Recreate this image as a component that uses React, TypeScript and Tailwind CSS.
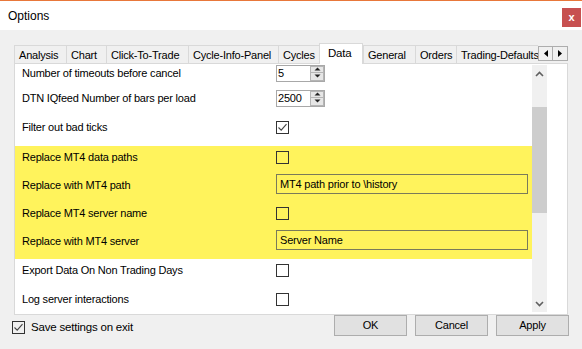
import React from 'react';

const FONT = "[font-family:'Liberation_Sans',Arial,sans-serif]";

function Checkbox({ checked = false }: { checked?: boolean }) {
  return (
    <span className="inline-flex w-[13px] h-[13px] shrink-0 items-center justify-center border border-[#333333]">
      {checked && (
        <svg width="11" height="11" viewBox="0 0 11 11">
          <path d="M1.5 5.5 L4.2 8.2 L9.5 2.2" fill="none" stroke="#444444" strokeWidth="1.1" />
        </svg>
      )}
    </span>
  );
}

function SpinBox({ value }: { value: string }) {
  return (
    <div className="flex w-[49px] h-[17px] border border-[#a8a8a8] bg-white">
      <span className="flex-1 pl-[1px] leading-[15px]">{value}</span>
      <div className="flex flex-col w-[14px] h-[15px]">
        <span className="flex h-[7px] items-center justify-center border border-[#b5b5b5] bg-[#e6e6e6]">
          <svg width="7" height="4" viewBox="0 0 7 4"><path d="M0.5 3.5 L3.5 0.5 L6.5 3.5 Z" fill="#222" /></svg>
        </span>
        <span className="flex h-[8px] items-center justify-center border border-t-0 border-[#b5b5b5] bg-[#e6e6e6]">
          <svg width="7" height="4" viewBox="0 0 7 4"><path d="M0.5 0.5 L3.5 3.5 L6.5 0.5 Z" fill="#222" /></svg>
        </span>
      </div>
    </div>
  );
}

function TextBox({ value }: { value: string }) {
  return (
    <div className="w-[252px] h-[20px] border border-[#7a7a5a] pl-[3px] leading-[18px] -mt-[3px]">{value}</div>
  );
}

type Row = { label: string; h: string; inner: string; yellow?: boolean; ctrl: React.ReactNode };

const ROWS: Row[] = [
  { label: 'Number of timeouts before cancel', h: 'h-[23px]', inner: 'h-[18px]', ctrl: <SpinBox value="5" /> },
  { label: 'DTN IQfeed Number of bars per load', h: 'h-[29px]', inner: 'h-[22px]', ctrl: <SpinBox value="2500" /> },
  { label: 'Filter out bad ticks', h: 'h-[30px]', inner: 'h-[22px]', ctrl: <Checkbox checked /> },
  { label: 'Replace MT4 data paths', h: 'h-[28px]', inner: 'h-[22px]', yellow: true, ctrl: <Checkbox /> },
  { label: 'Replace with MT4 path', h: 'h-[28px]', inner: 'h-[22px]', yellow: true, ctrl: <TextBox value="MT4 path prior to \history" /> },
  { label: 'Replace MT4 server name', h: 'h-[28px]', inner: 'h-[22px]', yellow: true, ctrl: <Checkbox /> },
  { label: 'Replace with MT4 server', h: 'h-[29px]', inner: 'h-[22px]', yellow: true, ctrl: <TextBox value="Server Name" /> },
  { label: 'Export Data On Non Trading Days', h: 'h-[29px]', inner: 'h-[22px]', ctrl: <Checkbox /> },
  { label: 'Log server interactions', h: 'h-[29px]', inner: 'h-[22px]', ctrl: <Checkbox /> },
];

const TABS = [
  { label: 'Analysis', w: 'w-[52px]' },
  { label: 'Chart', w: 'w-[40px]' },
  { label: 'Click-To-Trade', w: 'w-[82px]' },
  { label: 'Cycle-Info-Panel', w: 'w-[90px]' },
  { label: 'Cycles', w: 'w-[41px]' },
  { label: 'Data', w: 'w-[44px]', active: true },
  { label: 'General', w: 'w-[52px]' },
  { label: 'Orders', w: 'w-[41px]' },
  { label: 'Trading-Defaults', w: 'w-[95px]' },
];

function Btn({ children }: { children: React.ReactNode }) {
  return (
    <button className="w-[73px] h-[21px] border border-[#adadad] bg-[#e1e1e1] text-[11px] leading-[19px] text-black">
      {children}
    </button>
  );
}

export default function App() {
  return (
    <div className={`w-[582px] h-[349px] bg-[#f0f0f0] overflow-hidden text-[11px] tracking-[-0.2px] text-black ${FONT}`}>
      <div className="h-px bg-[#e8773a]" />
      {/* title bar */}
      <div className="flex h-[29px] items-start bg-white tracking-normal">
        <span className="ml-[8px] mt-[7px] text-[12px] leading-[16px]">Options</span>
        <span className="ml-auto mr-[1px] mt-[7px] flex w-[19px] h-[19px] items-center justify-center bg-[#c75050] text-[11px] font-bold leading-none text-white">x</span>
      </div>

      <div className="pl-[14px] pt-[13px]">
        {/* tabs */}
        <div className="relative z-10 flex h-[21px] -mb-px">
          <div className="flex w-[524px] overflow-hidden">
            {TABS.map((t) =>
              t.active ? (
                <div key={t.label} className={`${t.w} shrink-0 h-[21px] border-x border-t border-[#d9d9d9] bg-white pl-[8px] leading-[19px] text-[11.5px]`}>
                  {t.label}
                </div>
              ) : (
                <div key={t.label} className={`${t.w} shrink-0 mt-[2px] h-[18px] border-l border-t border-[#d9d9d9] bg-[#f0f0f0] pl-[4px] leading-[18px] whitespace-nowrap`}>
                  {t.label}
                </div>
              )
            )}
          </div>
          <div className="mt-[3px] flex h-[15px]">
            <span className="flex w-[15px] h-[15px] items-center justify-center border border-[#adadad] bg-[#f0f0f0]">
              <svg width="4" height="7" viewBox="0 0 4 7"><path d="M4 0 L0 3.5 L4 7 Z" fill="#000" /></svg>
            </span>
            <span className="flex w-[15px] h-[15px] items-center justify-center border border-l-0 border-[#adadad] bg-[#f0f0f0]">
              <svg width="4" height="7" viewBox="0 0 4 7"><path d="M0 0 L4 3.5 L0 7 Z" fill="#000" /></svg>
            </span>
          </div>
        </div>

        {/* tab page */}
        <div className="flex w-[554px] h-[252px] border border-[#d9d9d9] bg-white">
          <div className="w-[517px] h-[250px] overflow-hidden">
            {ROWS.map((r) => (
              <div key={r.label} className={`${r.h} ${r.yellow ? 'bg-[#fff35c]' : ''} w-[518px]`}>
                <div className={`${r.inner} flex items-center`}>
                  <span className="w-[261px] shrink-0 pl-[7px] whitespace-nowrap">{r.label}</span>
                  {r.ctrl}
                </div>
              </div>
            ))}
          </div>
          {/* scrollbar */}
          <div className="mt-[1px] flex w-[15px] h-[247px] flex-col bg-[#f0f0f0]">
            <div className="flex h-[17px] items-center justify-center">
              <svg width="9" height="6" viewBox="0 0 9 6"><path d="M1 5 L4.5 1.5 L8 5" fill="none" stroke="#606060" strokeWidth="1.6" /></svg>
            </div>
            <div className="h-[25px]" />
            <div className="h-[106px] bg-[#cdcdcd]" />
            <div className="flex-1" />
            <div className="flex h-[17px] items-center justify-center">
              <svg width="9" height="6" viewBox="0 0 9 6"><path d="M1 1 L4.5 4.5 L8 1" fill="none" stroke="#606060" strokeWidth="1.6" /></svg>
            </div>
          </div>
        </div>
      </div>

      {/* bottom */}
      <div className="flex items-start">
        <div className="ml-[12px] mt-[4px] flex items-center gap-[6px]">
          <Checkbox checked />
          <span className="text-[11.5px]">Save settings on exit</span>
        </div>
        <div className="ml-auto mr-[13px] flex gap-[8px]">
          <Btn>OK</Btn>
          <Btn>Cancel</Btn>
          <Btn>Apply</Btn>
        </div>
      </div>
    </div>
  );
}
